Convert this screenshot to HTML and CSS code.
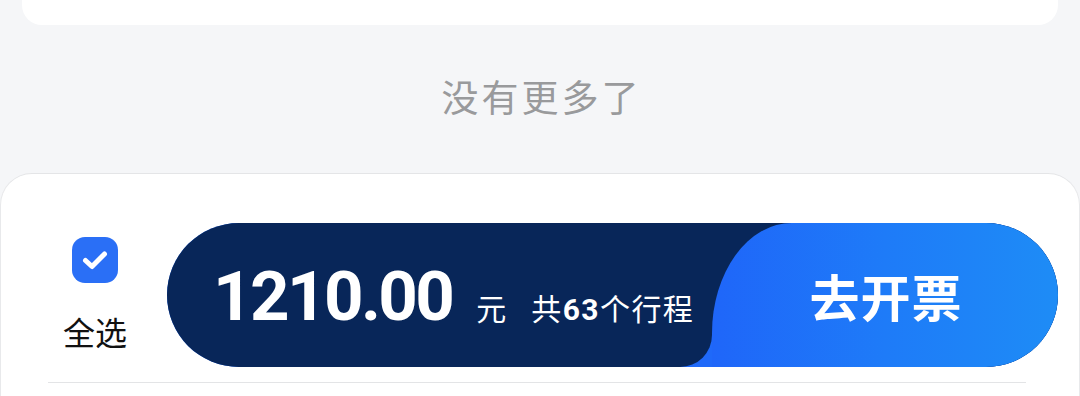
FILE: index.html
```html
<!DOCTYPE html>
<html lang="zh">
<head>
<meta charset="utf-8">
<link rel="stylesheet" href="styles.css">
</head>
<body>
<div class="page">
  <div class="top-card"></div>
  <div class="nomore">没有更多了</div>
  <div class="panel">
    <div class="bar">
      <div class="select">
        <svg class="check" width="46" height="46" viewBox="0 0 46 46">
          <rect x="0" y="0" width="46" height="46" rx="13" fill="#2a6ff6"/>
          <path d="M13.5 23.5 L20 29.5 L32.5 17" fill="none" stroke="#fff" stroke-width="5" stroke-linecap="round" stroke-linejoin="round"/>
        </svg>
        <div class="select-label">全选</div>
      </div>
      <div class="pill">
        <div class="amount-part">
          <div class="amount-line">
            <span class="amount">1210.00</span>
            <span class="unit">元</span>
            <span class="trips">共<b>63</b>个行程</span>
          </div>
        </div>
        <div class="go-wrap">
          <div class="go">去开票</div>
        </div>
      </div>
    </div>
    <div class="divider"></div>
  </div>
</div>
</body>
</html>
```
FILE: styles.css
```css
* { box-sizing: border-box; }
html, body {
  margin: 0;
  padding: 0;
  background: #f5f6f8;
}
body {
  width: 1080px;
  height: 396px;
  overflow: hidden;
  font-family: "Noto Sans CJK SC", "Noto Sans", sans-serif;
}
.page {
  display: flex;
  flex-direction: column;
  height: 396px;
}
.top-card {
  height: 25px;
  margin: 0 22px;
  background: #fff;
  border-radius: 0 0 20px 20px;
}
.nomore {
  margin-top: 46px;
  height: 50px;
  line-height: 50px;
  text-align: center;
  font-size: 37px;
  color: #999a9c;
  letter-spacing: 3px;
  padding-left: 3px;
}
.panel {
  margin-top: 52px;
  flex: 1;
  background: #fff;
  border-top: 1px solid #e4e5e7;
  border-left: 1px solid #e8e9eb;
  border-right: 1px solid #e8e9eb;
  border-radius: 32px 32px 0 0;
  padding: 49px 21px 0 39px;
}
.bar {
  display: flex;
  gap: 17px;
  height: 144px;
}
.select {
  width: 110px;
  display: flex;
  flex-direction: column;
  align-items: center;
  padding-top: 14px;
}
.check { display: block; }
.select-label {
  margin-top: 28px;
  font-size: 32px;
  line-height: 40px;
  color: #111;
}
.pill {
  flex: 1;
  display: flex;
  height: 144px;
  border-radius: 72px;
  overflow: hidden;
  background: #1f69f9;
}
.amount-part {
  width: 545px;
  background: #082659;
  border-bottom-right-radius: 32px;
  display: flex;
  align-items: center;
  padding-left: 46px;
  padding-top: 4px;
}
.amount-line {
  display: flex;
  align-items: baseline;
  color: #fff;
}
.amount {
  font-family: "Roboto", "Liberation Sans", sans-serif;
  font-weight: 700;
  font-size: 69px;
  line-height: 68px;
  letter-spacing: -2.6px;
}
.unit {
  margin-left: 24px;
  font-size: 30px;
}
.trips {
  margin-left: 25px;
  font-size: 30px;
  letter-spacing: 1.4px;
}
.trips b {
  font-family: "Roboto", "Liberation Sans", sans-serif;
  font-weight: 700;
}
.go-wrap {
  flex: 1;
  background: #082659;
}
.go {
  height: 100%;
  background: linear-gradient(90deg, #1f66f9 0%, #1e7bf8 50%, #1e8cf6 100%);
  border-top-left-radius: 80px 110px;
  display: flex;
  align-items: center;
  justify-content: center;
  color: #fff;
  font-size: 50px;
  font-weight: 700;
  letter-spacing: 1px;
  padding-left: 2px;
}
.divider {
  margin: 15px 32px 0 8px;
  height: 1px;
  background: #e3e4e6;
}
```
